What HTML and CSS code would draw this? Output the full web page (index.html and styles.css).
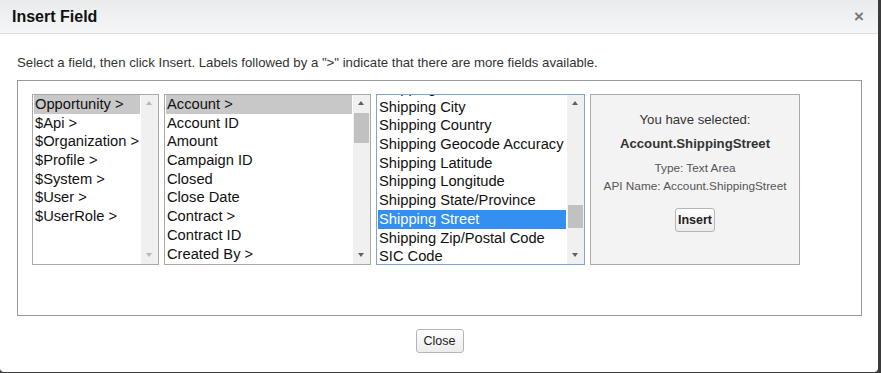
FILE: index.html
```html
<!DOCTYPE html>
<html lang="en">
<head>
    <meta charset="UTF-8">
    <title>Insert Field</title>
    <link rel="stylesheet" href="styles.css">
</head>
<body>
    <div class="dialog">
        <!-- Header -->
        <div class="dialog-header">
            <h2 class="dialog-title">Insert Field</h2>
            <span class="dialog-close">&times;</span>
        </div>

        <div class="dialog-body">
            <p class="hint">Select a field, then click Insert. Labels followed by a "&gt;" indicate that there are more fields available.</p>

            <div class="picker">
                <!-- Root objects -->
                <div class="listbox col-root">
                    <div class="items">
                        <div class="item selected">Opportunity &gt;</div>
                        <div class="item">$Api &gt;</div>
                        <div class="item">$Organization &gt;</div>
                        <div class="item">$Profile &gt;</div>
                        <div class="item">$System &gt;</div>
                        <div class="item">$User &gt;</div>
                        <div class="item">$UserRole &gt;</div>
                    </div>
                    <div class="scrollbar disabled">
                        <span class="arrow up"></span>
                        <span class="track"></span>
                        <span class="arrow down"></span>
                    </div>
                </div>

                <!-- Opportunity fields -->
                <div class="listbox col-fields">
                    <div class="items">
                        <div class="item selected">Account &gt;</div>
                        <div class="item">Account ID</div>
                        <div class="item">Amount</div>
                        <div class="item">Campaign ID</div>
                        <div class="item">Closed</div>
                        <div class="item">Close Date</div>
                        <div class="item">Contract &gt;</div>
                        <div class="item">Contract ID</div>
                        <div class="item">Created By &gt;</div>
                    </div>
                    <div class="scrollbar">
                        <span class="arrow up"></span>
                        <span class="track"><span class="thumb thumb-top"></span></span>
                        <span class="arrow down"></span>
                    </div>
                </div>

                <!-- Account fields -->
                <div class="listbox col-account focused">
                    <div class="items scrolled">
                        <div class="item">Shipping Address</div>
                        <div class="item">Shipping City</div>
                        <div class="item">Shipping Country</div>
                        <div class="item">Shipping Geocode Accuracy</div>
                        <div class="item">Shipping Latitude</div>
                        <div class="item">Shipping Longitude</div>
                        <div class="item">Shipping State/Province</div>
                        <div class="item active">Shipping Street</div>
                        <div class="item">Shipping Zip/Postal Code</div>
                        <div class="item">SIC Code</div>
                    </div>
                    <div class="scrollbar">
                        <span class="arrow up"></span>
                        <span class="track"><span class="thumb thumb-low"></span></span>
                        <span class="arrow down"></span>
                    </div>
                </div>

                <!-- Selection info -->
                <div class="selection">
                    <div class="sel-label">You have selected:</div>
                    <div class="sel-name">Account.ShippingStreet</div>
                    <div class="sel-meta">Type: Text Area</div>
                    <div class="sel-meta">API Name: Account.ShippingStreet</div>
                    <button class="btn btn-insert">Insert</button>
                </div>
            </div>

            <div class="footer">
                <button class="btn btn-close">Close</button>
            </div>
        </div>
    </div>
</body>
</html>
```

FILE: styles.css
```css
/* Reset */
html, body {
    margin: 0;
    padding: 0;
}

body {
    background: #3a3a3a;
    font-family: "Liberation Sans", Arial, sans-serif;
    color: #222;
    width: 881px;
    height: 373px;
    overflow: hidden;
}

/* Dialog frame */
.dialog {
    width: 878px;
    height: 372px;
    background: #fff;
    border-radius: 0 0 4px 4px;
    overflow: hidden;
}

.dialog-header {
    height: 34px;
    display: flex;
    align-items: center;
    justify-content: space-between;
    padding: 0 14px 0 12px;
    background: linear-gradient(#e9ebed, #f5f6f7);
    border-bottom: 1px solid #dcdfe2;
    box-sizing: border-box;
}

.dialog-title {
    margin: 0;
    font-size: 16px;
    font-weight: bold;
    color: #111;
}

.dialog-close {
    font-size: 17px;
    font-weight: bold;
    color: #777;
    line-height: 1;
}

.dialog-body {
    padding: 0 16px 0 17px;
}

.hint {
    margin: 21px 0 9px;
    font-size: 13.2px;
    line-height: 16px;
    color: #333;
}

/* Picker box */
.picker {
    height: 236px;
    border: 1px solid #999;
    padding: 13px 14px;
    box-sizing: border-box;
    display: flex;
    align-items: flex-start;
    gap: 5px;
}

.listbox {
    height: 171px;
    border: 1px solid #a9a9a9;
    box-sizing: border-box;
    display: flex;
    overflow: hidden;
    background: #fff;
}

.col-root { width: 127px; }
.col-fields { width: 207px; }
.col-account { width: 209px; }

.listbox.focused {
    border-color: #7aa7d6;
}

.items {
    flex: 1;
    padding: 0 1px;
    overflow: hidden;
}

.items.scrolled {
    margin-top: -16px;
}

.item {
    height: 18.7px;
    line-height: 18.7px;
    font-size: 14.7px;
    padding-left: 1px;
    white-space: nowrap;
    color: #111;
}

.item.selected {
    background: #c8c8c8;
}

.item.active {
    background: #3390f0;
    color: #fff;
}

/* Fake scrollbars */
.scrollbar {
    width: 17px;
    background: #f0f0f0;
    display: flex;
    flex-direction: column;
    align-items: center;
}

.scrollbar .track {
    flex: 1;
    width: 100%;
    position: relative;
}

.arrow {
    height: 17px;
    width: 100%;
    position: relative;
}

.arrow::after {
    content: "";
    position: absolute;
    left: 5px;
    top: 6px;
    border-left: 3.5px solid transparent;
    border-right: 3.5px solid transparent;
}

.arrow.up::after { border-bottom: 4px solid #606060; }
.arrow.down::after { border-top: 4px solid #606060; }

.scrollbar.disabled .arrow.up::after { border-bottom-color: #b8b8b8; }
.scrollbar.disabled .arrow.down::after { border-top-color: #b8b8b8; }

.thumb {
    position: absolute;
    left: 1px;
    right: 1px;
    background: #c1c1c1;
}

.thumb-top { top: 1px; height: 30px; }
.thumb-low { top: 93px; height: 23px; }

/* Selected field panel */
.selection {
    width: 210px;
    height: 171px;
    box-sizing: border-box;
    background: #f3f3f3;
    border: 1px solid #aaa;
    display: flex;
    flex-direction: column;
    align-items: center;
    padding-top: 17px;
    color: #333;
}

.sel-label {
    font-size: 13.2px;
    line-height: 15px;
}

.sel-name {
    font-size: 13.2px;
    line-height: 15px;
    font-weight: bold;
    margin-top: 9px;
}

.sel-meta {
    font-size: 11.8px;
    line-height: 14px;
    color: #555;
    margin-top: 10px;
}

.sel-meta + .sel-meta {
    margin-top: 4px;
}

/* Buttons */
.btn {
    font-family: "Liberation Sans", Arial, sans-serif;
    font-size: 12.5px;
    color: #222;
    border: 1px solid #b5b5b5;
    border-radius: 3px;
    background: linear-gradient(#fdfdfd, #ececec);
    padding: 0;
    height: 24px;
}

.btn-insert {
    width: 40px;
    margin-top: 15px;
    font-weight: bold;
}

.footer {
    display: flex;
    justify-content: center;
    padding-top: 13px;
}

.btn-close {
    width: 48px;
}
```
